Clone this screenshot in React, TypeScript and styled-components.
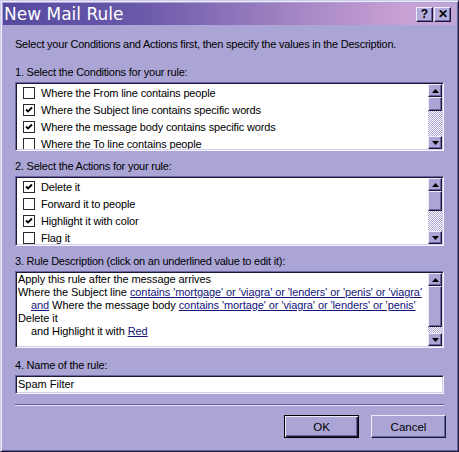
import React from "react";
import styled, { createGlobalStyle } from "styled-components";

const FACE = "#aba5d6";
const DARK = "#1c1838";
const SHADOW = "#6a64a0";
const LIGHT = "#eeecfc";
const FONT = `"Liberation Sans", Arial, sans-serif`;

const Global = createGlobalStyle`
  html, body { margin: 0; padding: 0; background: ${FACE}; }
  body { font-family: ${FONT}; color: #000; }
  * { box-sizing: border-box; }
`;

const Window = styled.div`
  width: 459px;
  height: 452px;
  background: ${FACE};
  border-top: 1px solid #cfcbea;
  border-left: 1px solid #cfcbea;
  border-right: 1px solid ${DARK};
  border-bottom: 1px solid ${DARK};
  box-shadow: inset 1px 1px ${LIGHT}, inset -1px -1px ${SHADOW};
  padding: 2px;
  display: flex;
  flex-direction: column;
  overflow: hidden;
`;

const TitleBar = styled.div`
  height: 22px;
  flex: none;
  display: flex;
  align-items: center;
  padding: 0 5px 0 1px;
  background: linear-gradient(90deg, #554aa0 0%, #6a58aa 30%, #a082c2 62%, #c8a0d4 88%, #c2a6d8 100%);
`;

const TitleText = styled.div`
  flex: 1;
  font-family: "DejaVu Sans", "Liberation Sans", sans-serif;
  font-size: 17px;
  line-height: 22px;
  color: #fff;
  white-space: nowrap;
`;

const TitleButton = styled.div<{ $ml?: number }>`
  width: 17px;
  height: 15px;
  margin-left: ${(p) => p.$ml ?? 0}px;
  background: #b4aede;
  border-top: 1px solid ${LIGHT};
  border-left: 1px solid ${LIGHT};
  border-right: 1px solid ${DARK};
  border-bottom: 1px solid ${DARK};
  box-shadow: inset -1px -1px ${SHADOW};
  display: flex;
  align-items: center;
  justify-content: center;
  font-family: "Liberation Sans", Arial, sans-serif;
  font-weight: bold;
  font-size: 12px;
  line-height: 1;
  color: #000;
`;

const Body = styled.div`
  flex: 1;
  display: flex;
  flex-direction: column;
  padding: 0 12px;
`;

const Label = styled.div<{ $mt: number }>`
  margin-top: ${(p) => p.$mt}px;
  height: 14px;
  font-size: 11px;
  letter-spacing: -0.22px;
  line-height: 14px;
  white-space: nowrap;
`;

const Sunken = styled.div<{ $h: number; $mt?: number }>`
  height: ${(p) => p.$h}px;
  margin-top: ${(p) => p.$mt ?? 3}px;
  background: #fff;
  border-top: 1px solid ${SHADOW};
  border-left: 1px solid ${SHADOW};
  border-right: 1px solid #f6f5ff;
  border-bottom: 1px solid #f6f5ff;
  box-shadow: inset 1px 1px ${DARK}, inset -1px -1px #d2cfec;
  padding: 1px;
  display: flex;
  overflow: hidden;
`;

const Rows = styled.div`
  flex: 1;
  overflow: hidden;
`;

const Row = styled.div`
  height: 17px;
  display: flex;
  align-items: center;
  padding-left: 6px;
  gap: 6px;
  font-size: 11px;
  letter-spacing: -0.15px;
  white-space: nowrap;
`;

const Box = styled.div`
  width: 12px;
  height: 12px;
  flex: none;
  background: #fff;
  border: 1px solid #2a2a2a;
  display: flex;
  align-items: center;
  justify-content: center;
`;

const Scrollbar = styled.div`
  width: 14px;
  flex: none;
  display: flex;
  flex-direction: column;
`;

const ScrollButton = styled.div<{ $h?: number }>`
  height: ${(p) => p.$h ?? 13}px;
  flex: none;
  background: ${FACE};
  border-top: 1px solid ${LIGHT};
  border-left: 1px solid ${LIGHT};
  border-right: 1px solid ${DARK};
  border-bottom: 1px solid ${DARK};
  box-shadow: inset -1px -1px ${SHADOW};
  display: flex;
  align-items: center;
  justify-content: center;
`;

const Track = styled.div`
  flex: 1;
  background-color: #fff;
  background-image: conic-gradient(#fff 25%, ${FACE} 0 50%, #fff 0 75%, ${FACE} 0);
  background-size: 2px 2px;
`;

const Desc = styled.div`
  flex: 1;
  padding-left: 1px;
  font-size: 11px;
  letter-spacing: -0.08px;
  line-height: 13px;
  white-space: nowrap;
  overflow: hidden;
`;

const Line = styled.div<{ $indent?: boolean }>`
  height: 13px;
  padding-left: ${(p) => (p.$indent ? 13 : 0)}px;
`;

const Link = styled.span`
  color: #14147a;
  text-decoration: underline;
`;

const Input = styled.div`
  height: 19px;
  margin-top: 3px;
  background: #fff;
  border-top: 1px solid ${SHADOW};
  border-left: 1px solid ${SHADOW};
  border-right: 1px solid #f6f5ff;
  border-bottom: 1px solid #f6f5ff;
  box-shadow: inset 1px 1px ${DARK}, inset -1px -1px #d2cfec;
  padding-left: 2px;
  font-size: 11px;
  line-height: 17px;
  white-space: nowrap;
`;

const Separator = styled.div`
  margin-top: 10px;
  height: 2px;
  border-top: 1px solid #5e5894;
  border-bottom: 1px solid #e8e6f8;
`;

const ButtonRow = styled.div`
  margin-top: 9px;
  margin-right: -2px;
  display: flex;
  justify-content: flex-end;
  gap: 12px;
`;

const Button = styled.div<{ $default?: boolean }>`
  width: 75px;
  height: 23px;
  display: flex;
  align-items: center;
  justify-content: center;
  font-size: 11.5px;
  background: ${FACE};
  border: 1px solid ${(p) => (p.$default ? "#000" : LIGHT)};
  ${(p) =>
    p.$default
      ? `box-shadow: inset 1px 1px ${LIGHT}, inset -1px -1px ${DARK}, inset -2px -2px ${SHADOW};`
      : `border-right-color: ${DARK}; border-bottom-color: ${DARK}; box-shadow: inset -1px -1px ${SHADOW};`}
`;

const Up = () => (
  <svg width="7" height="4" viewBox="0 0 7 4">
    <path d="M3.5 0 L7 4 L0 4 Z" fill="#000" />
  </svg>
);
const Down = () => (
  <svg width="7" height="4" viewBox="0 0 7 4">
    <path d="M0 0 L7 0 L3.5 4 Z" fill="#000" />
  </svg>
);

const Check = () => (
  <svg width="8" height="8" viewBox="0 0 8 8">
    <path d="M1 3.5 L3 5.5 L7 1.5" stroke="#000" strokeWidth="1.8" fill="none" />
  </svg>
);

const Scroll = ({ thumb }: { thumb: number }) => (
  <Scrollbar>
    <ScrollButton>
      <Up />
    </ScrollButton>
    <ScrollButton $h={thumb} />
    <Track />
    <ScrollButton>
      <Down />
    </ScrollButton>
  </Scrollbar>
);

type Item = { label: string; checked: boolean };

const CheckList = ({ items, h, thumb }: { items: Item[]; h: number; thumb: number }) => (
  <Sunken $h={h}>
    <Rows>
      {items.map((it) => (
        <Row key={it.label}>
          <Box>{it.checked && <Check />}</Box>
          <span>{it.label}</span>
        </Row>
      ))}
    </Rows>
    <Scroll thumb={thumb} />
  </Sunken>
);

const conditions: Item[] = [
  { label: "Where the From line contains people", checked: false },
  { label: "Where the Subject line contains specific words", checked: true },
  { label: "Where the message body contains specific words", checked: true },
  { label: "Where the To line contains people", checked: false },
];

const actions: Item[] = [
  { label: "Delete it", checked: true },
  { label: "Forward it to people", checked: false },
  { label: "Highlight it with color", checked: true },
  { label: "Flag it", checked: false },
];

export default function App() {
  return (
    <>
      <Global />
      <Window>
        <TitleBar>
          <TitleText>New Mail Rule</TitleText>
          <TitleButton>?</TitleButton>
          <TitleButton $ml={1}>✕</TitleButton>
        </TitleBar>
        <Body>
          <Label $mt={12}>
            Select your Conditions and Actions first, then specify the values in the Description.
          </Label>
          <Label $mt={14}>1. Select the Conditions for your rule:</Label>
          <CheckList items={conditions} h={69} thumb={14} />
          <Label $mt={8}>2. Select the Actions for your rule:</Label>
          <CheckList items={actions} h={70} thumb={20} />
          <Label $mt={8}>3. Rule Description (click on an underlined value to edit it):</Label>
          <Sunken $h={77}>
            <Desc>
              <Line>Apply this rule after the message arrives</Line>
              <Line>
                Where the Subject line{" "}
                <Link>contains 'mortgage' or 'viagra' or 'lenders' or 'penis' or 'viagra'</Link>
              </Line>
              <Line $indent>
                <Link>and</Link> Where the message body{" "}
                <Link>contains 'mortage' or 'viagra' or 'lenders' or 'penis'</Link>
              </Line>
              <Line>Delete it</Line>
              <Line $indent>
                and Highlight it with <Link>Red</Link>
              </Line>
            </Desc>
            <Scroll thumb={41} />
          </Sunken>
          <Label $mt={10}>4. Name of the rule:</Label>
          <Input>Spam Filter</Input>
          <Separator />
          <ButtonRow>
            <Button $default>OK</Button>
            <Button>Cancel</Button>
          </ButtonRow>
        </Body>
      </Window>
    </>
  );
}
